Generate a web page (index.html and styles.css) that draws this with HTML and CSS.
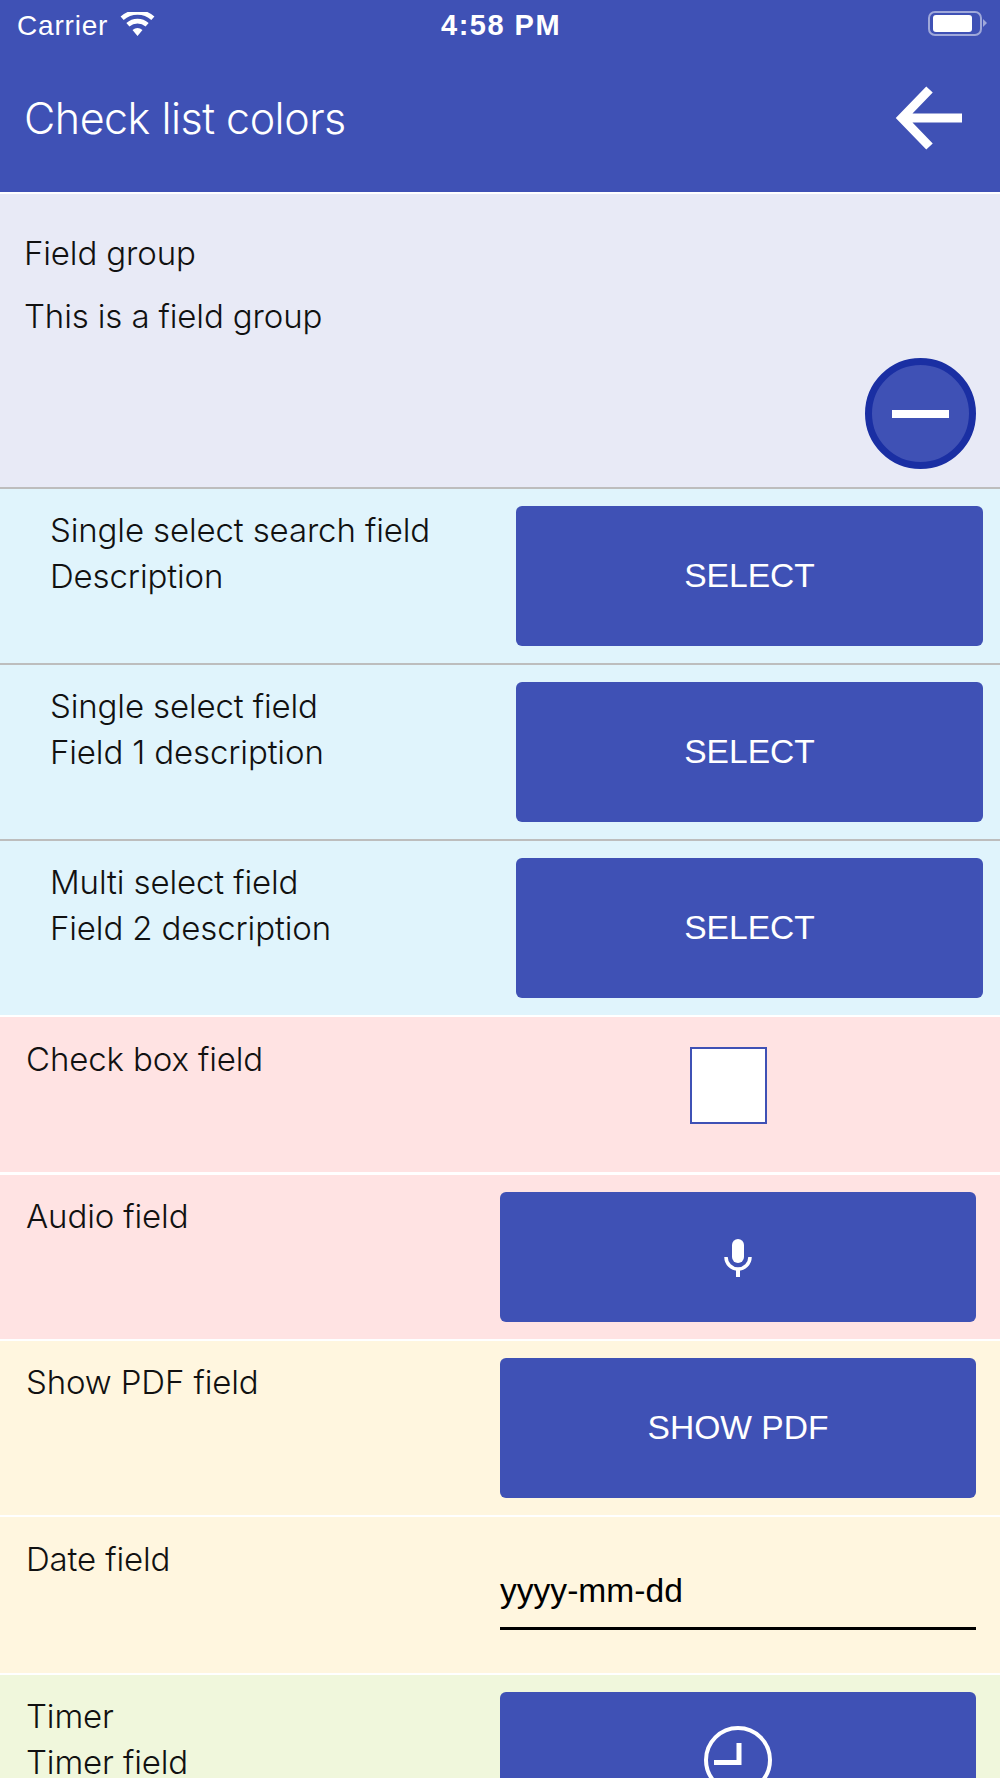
FILE: index.html
```html
<!DOCTYPE html>
<html lang="en">
<head>
<meta charset="utf-8">
<title>Check list colors</title>
<link rel="stylesheet" href="styles.css">
</head>
<body>
<div class="screen">
  <header class="appbar">
    <div class="status">
      <div class="status-left">
        <span class="carrier">Carrier</span>
        <svg class="wifi" viewBox="0 0 36 26" width="37" height="25"><path d="M18 25 L12.8 18.6 A8.5 8.5 0 0 1 23.2 18.6 Z M9.6 15.2 L6.4 11.4 A17.5 17.5 0 0 1 29.6 11.4 L26.4 15.2 A12.8 12.8 0 0 0 9.6 15.2 Z M3.6 8.2 L.4 4.6 A26.5 26.5 0 0 1 35.6 4.6 L32.4 8.2 A21.8 21.8 0 0 0 3.6 8.2 Z" fill="#fff"/></svg>
      </div>
      <span class="clock">4:58 PM</span>
      <div class="battery"><span class="battery-fill"></span></div>
    </div>
    <div class="titlebar">
      <h1 class="title">Check list colors</h1>
      <svg class="back" viewBox="0 0 68 64" width="68" height="64"><path d="M34.5 3.5 L7 32 L34.5 60.5 M7 32 H67" fill="none" stroke="#fff" stroke-width="9"/></svg>
    </div>
  </header>

  <section class="group">
    <p class="group-line">Field group</p>
    <p class="group-line">This is a field group</p>
    <button class="fab" aria-label="Collapse"><span class="minus"></span></button>
  </section>

  <div class="row blue">
    <div class="label indent">Single select search field<br>Description</div>
    <button class="btn wide">SELECT</button>
  </div>
  <div class="row blue">
    <div class="label indent">Single select field<br>Field 1 description</div>
    <button class="btn wide">SELECT</button>
  </div>
  <div class="row blue last">
    <div class="label indent">Multi select field<br>Field 2 description</div>
    <button class="btn wide">SELECT</button>
  </div>

  <div class="row pink check-row">
    <div class="label">Check box field</div>
    <div class="control check-wrap"><span class="checkbox"></span></div>
  </div>
  <div class="row pink audio-row">
    <div class="label">Audio field</div>
    <button class="btn control short" aria-label="Record">
      <svg class="mic" viewBox="0 0 28 38" width="28" height="38"><rect x="8" y="0" width="12" height="24" rx="6" fill="#fff"/><path d="M2 18 A12 12 0 0 0 26 18" fill="none" stroke="#fff" stroke-width="3.5"/><rect x="12" y="29" width="4" height="9" fill="#fff"/></svg>
    </button>
  </div>
  <div class="row cream pdf-row">
    <div class="label">Show PDF field</div>
    <button class="btn control">SHOW PDF</button>
  </div>
  <div class="row cream date-row">
    <div class="label">Date field</div>
    <div class="control date-input">yyyy-mm-dd</div>
  </div>
  <div class="row green timer-row">
    <div class="label">Timer<br>Timer field</div>
    <button class="btn control timer-btn" aria-label="Timer">
      <svg class="clock-icon" viewBox="0 0 70 70" width="70" height="70"><circle cx="35" cy="35" r="32" fill="none" stroke="#fff" stroke-width="4"/><path d="M36 18 V37.5 H11" fill="none" stroke="#fff" stroke-width="5"/></svg>
    </button>
  </div>
</div>
</body>
</html>
```
FILE: styles.css
```css
* { box-sizing: border-box; }
html, body { margin: 0; padding: 0; }
body { width: 1000px; height: 1778px; overflow: hidden; background: #fff; font-family: "Inter", "Liberation Sans", sans-serif; font-weight: 300; color: #111; }
.screen { display: flex; flex-direction: column; height: 1778px; overflow: hidden; }

.appbar { flex: none; height: 194px; background: #3f51b5; border-bottom: 2px solid #fff; color: #fff; }
.status { position: relative; height: 52px; display: flex; align-items: center; justify-content: space-between; padding: 0 18px 0 17px; }
.status-left { display: flex; align-items: center; gap: 11px; }
.carrier { font-family: "Liberation Sans", sans-serif; font-weight: 400; font-size: 28px; letter-spacing: .8px; }
.wifi { margin-top: -4px; }
.clock { position: absolute; left: 441px; top: 9px; font-family: "Liberation Sans", sans-serif; font-weight: 700; font-size: 29px; letter-spacing: 1.5px; }
.battery { width: 54px; height: 25px; margin-top: -5px; border: 2px solid #9fa8da; border-radius: 7px; padding: 2px 3px; position: relative; }
.battery::after { content: ""; position: absolute; right: -7px; top: 6px; width: 0; height: 0; border-left: 4px solid #9fa8da; border-top: 4px solid transparent; border-bottom: 4px solid transparent; }
.battery-fill { display: block; width: 39px; height: 17px; background: #fff; border-radius: 3px; }
.titlebar { height: 139px; display: flex; align-items: center; justify-content: space-between; padding: 0 37px 8px 24px; }
.title { margin: 0; font-size: 43px; font-weight: 300; letter-spacing: -.5px; }
.back { margin-top: 1px; }

.group { position: relative; flex: none; height: 295px; background: #e8eaf6; border-bottom: 2px solid #bdbdbd; padding: 40px 24px 0; font-size: 33px; letter-spacing: -.13px; }
.group-line { margin: 0 0 24px; line-height: 39px; }
.fab { position: absolute; right: 24px; top: 164px; width: 111px; height: 111px; border-radius: 50%; background: #3f51b5; border: 7px solid #1a2fa3; padding: 0; display: flex; align-items: center; justify-content: center; }
.minus { display: block; width: 57px; height: 8px; background: #fff; }

.row { flex: none; display: flex; justify-content: space-between; font-size: 33px; letter-spacing: -.13px; }
.blue { height: 176px; background: #e0f4fc; border-bottom: 2px solid #bdbdbd; padding: 17px 17px 0 50px; }
.blue.last { border-bottom-color: #fff; }
.pink { background: #ffe3e3; border-bottom: 3px solid #fff; }
.cream { background: #fff6df; border-bottom: 2px solid #fff; }
.green { background: #f0f7dc; }
.label { line-height: 46px; padding-top: 1px; }
.btn { border: 0; background: #3f51b5; color: #fff; border-radius: 6px; font: 400 33.6px "Liberation Sans", sans-serif; letter-spacing: 0; display: flex; align-items: center; justify-content: center; padding: 0; }
.wide { width: 467px; height: 140px; }
.control { width: 476px; }
.check-row, .audio-row, .pdf-row, .date-row, .timer-row { padding-left: 26px; padding-right: 24px; }
.check-row { height: 158px; padding-top: 18px; }
.audio-row { height: 166px; padding-top: 17px; border-bottom-width: 2px; }
.short { height: 130px; }
.mic { margin-top: 2px; }
.pdf-row { height: 176px; padding-top: 17px; }
.pdf-row .btn { height: 140px; }
.date-row { height: 158px; padding-top: 18px; }
.timer-row { flex: 1; padding-top: 17px; }
.timer-btn { height: 140px; align-items: flex-start; padding-top: 33px; }
.clock-icon { display: block; }
.check-wrap { padding: 12px 0 0 190px; }
.checkbox { display: block; width: 77px; height: 77px; background: #fff; border: 2px solid #3f51b5; }
.date-input { height: 95px; padding-top: 33px; border-bottom: 3px solid #000; font: 400 33.6px/46px "Liberation Sans", sans-serif; letter-spacing: 0; color: #000; }
```
